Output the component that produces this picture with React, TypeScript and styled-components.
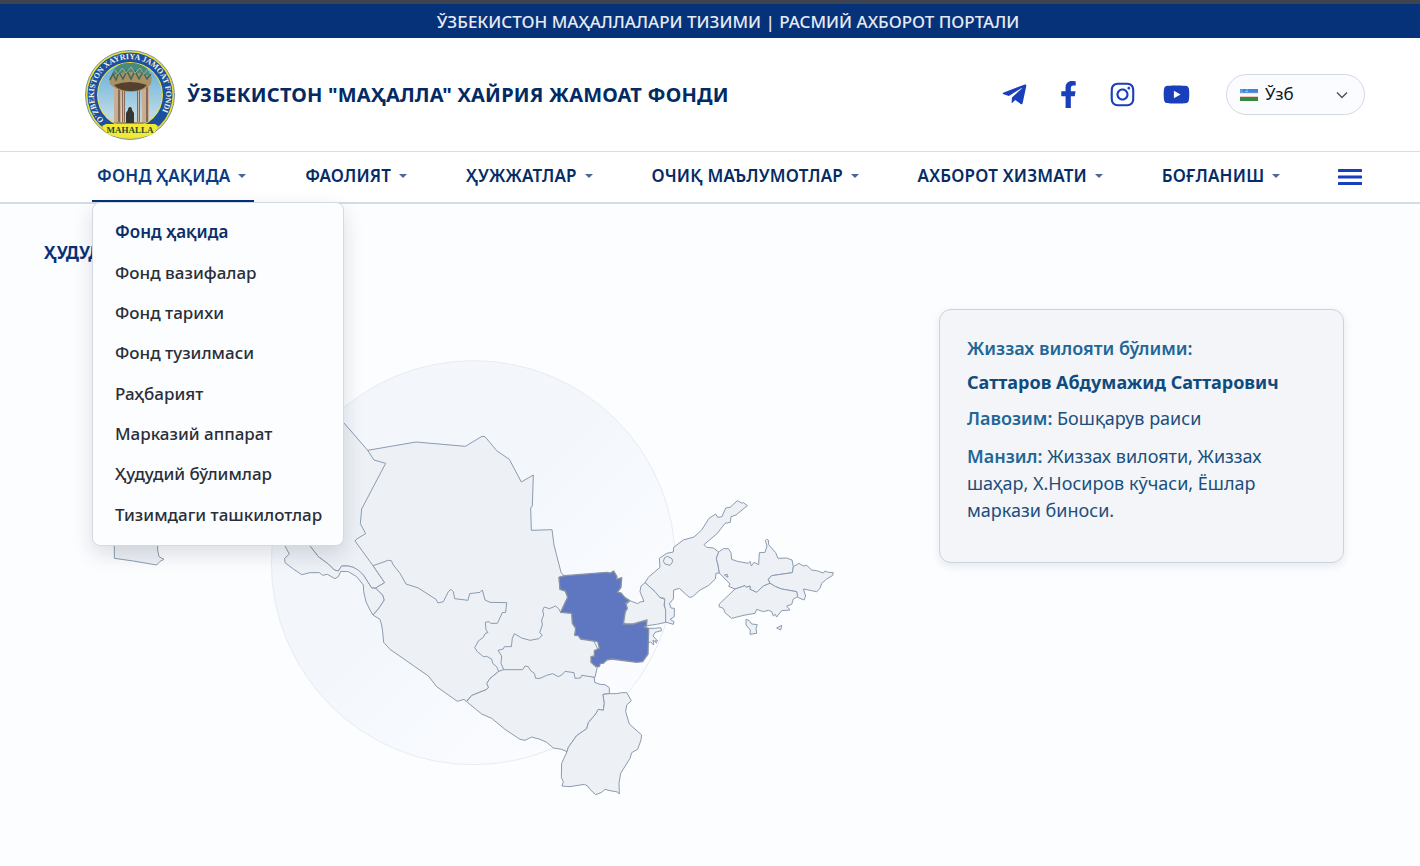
import React from "react";
import styled, { createGlobalStyle } from "styled-components";
import { FaTelegramPlane, FaFacebookF, FaInstagram, FaYoutube } from "react-icons/fa";

const GlobalStyle = createGlobalStyle`
  * { box-sizing: border-box; }
  body {
    margin: 0;
    background: #fcfdff;
    font-family: "Noto Sans", "Open Sans", sans-serif;
    color: #052c65;
  }
`;

const TopBar = styled.div`
  height: 38px;
  padding-left: 36px;
  border-top: 4px solid #3e4350;
  background: #06327a;
  color: #e6ebf3;
  font-size: 17px;
  font-weight: 500;
  line-height: 36px;
  text-align: center;
`;

const Header = styled.header`
  display: flex;
  align-items: center;
  justify-content: space-between;
  height: 114px;
  padding: 0 55px 0 85px;
  background: #fff;
  border-bottom: 1px solid #d9dde5;
`;

const Brand = styled.a`
  display: flex;
  align-items: center;
  gap: 12px;
  color: #032a63;
  text-decoration: none;
`;

const BrandName = styled.span`
  font-size: 20px;
  font-weight: 700;
  letter-spacing: 0.2px;
  line-height: 28px;
`;

const HeaderTools = styled.div`
  display: flex;
  align-items: center;
  gap: 36px;
`;

const SocialList = styled.div`
  display: flex;
  gap: 27px;
`;

const SocialLink = styled.a`
  display: flex;
  color: #1a3fbb;
`;

const LanguageBox = styled.label`
  display: flex;
  align-items: center;
  position: relative;
  width: 139px;
  height: 41px;
  border: 1px solid #d3d9e2;
  border-radius: 21px;
  background: #fbfcff;
`;

const Flag = styled.svg`
  position: absolute;
  left: 13px;
  pointer-events: none;
`;

const Chevron = styled.svg`
  position: absolute;
  right: 16px;
  pointer-events: none;
`;

const LanguageSelect = styled.select`
  appearance: none;
  width: 100%;
  height: 100%;
  padding: 0 36px 2px 38px;
  border: 0;
  border-radius: 21px;
  background: transparent;
  color: #10151d;
  font: 400 17px "Noto Sans", sans-serif;
`;

const Nav = styled.nav`
  display: flex;
  justify-content: space-between;
  height: 52px;
  padding: 0 58px 0 92px;
  background: #fff;
  border-bottom: 2px solid #d6dce6;
`;

const NavItem = styled.div`
  position: relative;
  display: flex;
`;

const NavButton = styled.button<{ $active?: boolean }>`
  display: flex;
  align-items: center;
  gap: 8px;
  padding: 0 8px 0 5px;
  border: 0;
  border-bottom: 2px solid ${(p) => (p.$active ? "#06327a" : "transparent")};
  background: none;
  color: ${(p) => (p.$active ? "#0b3a82" : "#052c65")};
  font: 600 17px/24px "Noto Sans", sans-serif;
  letter-spacing: 0.2px;
  white-space: nowrap;
`;

const Caret = styled.span`
  border: 4px solid transparent;
  border-top-color: #4a6796;
  border-bottom: 0;
`;

const Burger = styled.button`
  display: flex;
  align-items: center;
  padding: 0;
  margin-left: 4px;
  border: 0;
  background: none;
`;

const Dropdown = styled.div`
  position: absolute;
  z-index: 2;
  top: 50px;
  left: 0;
  display: grid;
  grid-auto-rows: 1fr;
  width: 252px;
  min-height: 344px;
  padding: 9px 0 10px;
  border: 1px solid #d3d9e2;
  border-radius: 8px;
  background: #fcfdff;
  box-shadow: 0 8px 20px rgba(20, 30, 50, 0.14);
`;

const DropdownLink = styled.a<{ $current?: boolean }>`
  display: flex;
  align-items: center;
  padding: 0 22px;
  color: ${(p) => (p.$current ? "#0a2f6b" : "#2a2e38")};
  font-size: 17px;
  font-weight: ${(p) => (p.$current ? 600 : 500)};
  line-height: 24px;
  text-decoration: none;
  white-space: nowrap;
`;

const Main = styled.main`
  padding: 36px 76px 56px 44px;
`;

const SectionTitle = styled.h2`
  margin: 0;
  color: #06327a;
  font-size: 17px;
  font-weight: 700;
  line-height: 26px;
`;

const Regions = styled.section`
  display: grid;
  grid-template-columns: minmax(0, 1fr) 405px;
  gap: 40px;
  align-items: start;
  padding-top: 43px;
`;

const MapDrawing = styled.svg`
  display: block;
  width: 100%;
  height: auto;
  margin-top: 41px;
`;

const Card = styled.article`
  min-height: 254px;
  padding: 25px 27px;
  border: 1px solid #c9d4e0;
  border-radius: 12px;
  background: #f4f5f9;
  box-shadow: 0 3px 8px rgba(30, 50, 80, 0.1);
  color: #1b4f7c;
  font-size: 18px;
  line-height: 27px;
`;

const CardTitle = styled.h3`
  margin: 0 0 7px;
  color: #1f6796;
  font-size: 18px;
  font-weight: 600;
  line-height: 27px;
`;

const PersonName = styled.p`
  margin: 0 0 9px;
  color: #0f4c7d;
  font-weight: 700;
`;

const Detail = styled.p`
  margin: 0 0 11px;
`;

const Term = styled.strong`
  color: #1f6796;
  font-weight: 600;
`;

const menuSections = ["ФАОЛИЯТ", "ҲУЖЖАТЛАР", "ОЧИҚ МАЪЛУМОТЛАР", "АХБОРОТ ХИЗМАТИ", "БОҒЛАНИШ"];

const fundPages = [
  "Фонд ҳақида",
  "Фонд вазифалар",
  "Фонд тарихи",
  "Фонд тузилмаси",
  "Раҳбарият",
  "Марказий аппарат",
  "Ҳудудий бўлимлар",
  "Тизимдаги ташкилотлар",
];

// Neighbouring regions overlap slightly; later ones define the shared border.
const regionShapes = [
  // Karakalpakstan
  "1103,1351 1032,1269 900,1130 600,1130 343,1300 343,1675 400,1683 470,1695 480,1684 492,1678 477,1670 473,1650 473,1600 930,1600 930,1638 955,1670 985,1692 1003,1710 1015,1713 1025,1698 1045,1698 1060,1702 1090,1725 1115,1764 1127,1764 1154,1748 1119,1697 1200,1600 1200,1400",
  // Khorezm
  "855,1600 855,1638 868,1662 854,1675 855,1688 880,1707 905,1724 930,1718 958,1718 968,1726 982,1723 1005,1736 1015,1730 1022,1714 1045,1715 1070,1730 1090,1755 1091,1775 1098,1805 1110,1830 1119,1845 1135,1827 1153,1800 1148,1785 1128,1765 1115,1764 1090,1725 1075,1710 1060,1702 1045,1698 1025,1698 1015,1713 1003,1710 985,1692 955,1670 930,1638 930,1600",
  // Kashkadarya
  "1496,2014 1520,1990 1700,1990 1783,2033 1784,2047 1800,2053 1815,2054 1828,2063 1828,2081 1809,2083 1813,2110 1810,2131 1795,2128 1787,2142 1765,2168 1760,2186 1730,2207 1705,2242 1701,2255 1685,2248 1660,2244 1640,2227 1620,2218 1595,2211 1575,2221 1560,2218 1515,2188 1475,2155 1445,2142 1400,2105 1415,2086 1460,2068 1465,2062 1460,2050 1470,2035",
  // Bukhara
  "1119,1845 1140,1858 1145,1875 1148,1895 1151,1927 1170,1948 1285,2028 1310,2060 1372,2104 1392,2098 1399,2104 1415,2086 1460,2068 1465,2062 1460,2050 1470,2035 1496,2014 1500,1990 1480,1951 1500,1900 1560,1800 1540,1750 1190,1650 1119,1697 1154,1748 1127,1764 1148,1785 1153,1800 1135,1827",
  // Samarkand
  "1511,2009 1568,2009 1575,1998 1585,2000 1592,2012 1603,2020 1607,2035 1620,2035 1640,2026 1658,2021 1675,2030 1685,2025 1695,2014 1722,2018 1725,2035 1742,2034 1745,2026 1785,2032 1792,2000 1800,1960 1760,1880 1720,1810 1650,1790 1600,1800 1530,1880 1480,1951 1500,1990",
  // Navoi
  "1103,1351 1248,1326 1396,1339 1446,1309 1455,1310 1490,1352 1528,1378 1564,1446 1600,1425 1597,1518 1592,1524 1594,1591 1656,1589 1662,1635 1683,1717 1692,1727 1677,1732 1680,1768 1696,1773 1703,1792 1682,1837 1675,1825 1667,1818 1648,1826 1633,1821 1628,1830 1631,1845 1625,1860 1627,1875 1619,1898 1627,1905 1617,1916 1590,1921 1565,1914 1543,1901 1537,1915 1534,1940 1513,1940 1510,1947 1494,1951 1505,1968 1503,1990 1511,2009 1496,2014 1490,2000 1478,1990 1475,1977 1460,1969 1450,1970 1432,1955 1424,1943 1435,1923 1450,1912 1455,1901 1464,1897 1458,1890 1456,1867 1467,1865 1472,1870 1492,1870 1507,1838 1517,1837 1520,1808 1470,1807 1455,1800 1447,1770 1440,1777 1409,1781 1404,1801 1364,1796 1360,1775 1353,1768 1345,1775 1330,1805 1314,1809 1308,1798 1255,1764 1218,1752 1200,1720 1180,1695 1174,1682 1165,1681 1119,1697 1065,1623 1070,1617 1097,1601 1081,1571 1085,1527 1157,1390 1122,1380",
  // Surkhandarya
  "1828,2081 1850,2081 1865,2078 1880,2078 1894,2102 1880,2115 1877,2135 1888,2172 1925,2205 1923,2220 1913,2248 1895,2258 1890,2275 1862,2320 1857,2350 1858,2382 1853,2376 1830,2372 1815,2368 1805,2377 1787,2384 1770,2368 1763,2358 1753,2353 1710,2360 1686,2358 1690,2345 1684,2333 1685,2290 1701,2255 1705,2242 1730,2207 1760,2186 1765,2168 1787,2142 1795,2128 1810,2131 1813,2110 1809,2083",
  // Tashkent
  "1935,1748 1945,1732 1980,1702 1978,1675 2000,1660 2020,1656 2021,1642 2050,1620 2082,1611 2105,1590 2127,1555 2147,1542 2153,1552 2166,1550 2177,1524 2190,1522 2212,1502 2225,1509 2230,1508 2242,1517 2208,1545 2193,1550 2191,1567 2175,1570 2152,1600 2112,1634 2120,1642 2140,1644 2156,1656 2149,1675 2154,1695 2158,1719 2148,1720 2146,1737 2125,1757 2100,1770 2078,1790 2068,1792 2038,1765 2021,1770 2020,1797 2008,1810 2013,1824 2023,1825 2023,1850 2010,1858 2022,1865 2020,1873 1996,1866 1994,1820 1993,1795 1978,1792 1960,1770",
  // Sirdarya
  "1889,1802 1913,1811 1920,1806 1932,1804 1920,1775 1923,1758 1935,1748 1965,1775 1980,1793 1995,1798 1992,1815 1997,1830 1997,1867 1970,1873 1941,1877 1900,1890 1850,1850",
  // Namangan
  "2156,1656 2170,1646 2185,1646 2193,1658 2195,1678 2212,1684 2245,1690 2250,1684 2254,1698 2262,1687 2276,1694 2278,1658 2295,1657 2301,1638 2296,1622 2300,1618 2305,1620 2306,1634 2327,1658 2334,1675 2360,1674 2376,1680 2380,1700 2377,1718 2315,1727 2305,1738 2310,1750 2290,1758 2270,1777 2250,1768 2250,1758 2239,1762 2235,1757 2205,1767 2186,1759 2190,1752 2158,1719 2154,1695 2149,1675",
  // Andijan
  "2377,1718 2380,1700 2397,1690 2410,1698 2420,1696 2435,1710 2450,1712 2470,1719 2475,1713 2485,1717 2500,1718 2498,1726 2480,1737 2465,1750 2460,1765 2450,1775 2435,1772 2410,1767 2417,1788 2412,1800 2393,1792 2390,1775 2345,1767 2327,1760 2310,1750 2305,1738 2315,1727",
  // Fergana
  "2205,1767 2158,1812 2157,1820 2170,1825 2175,1838 2195,1855 2235,1845 2265,1840 2270,1828 2290,1835 2305,1831 2315,1835 2320,1848 2326,1843 2330,1851 2345,1832 2370,1830 2360,1818 2375,1813 2380,1797 2393,1790 2390,1775 2345,1767 2327,1760 2310,1750 2290,1758 2270,1777 2250,1768 2250,1758 2239,1762 2235,1757",
  // Small exclaves
  "1994,1673 2002,1669 2016,1676 2018,1685 2010,1696 1995,1692 1990,1684",
  "1941,1885 1963,1885 1982,1883 1985,1892 1965,1897 1959,1908 1973,1923 1966,1922 1970,1929 1959,1920 1961,1935 1951,1925 1944,1932",
  "2238,1858 2248,1862 2255,1872 2272,1874 2268,1885 2270,1900 2250,1903 2251,1890 2238,1875",
  "2330,1884 2345,1876 2342,1890",
  "2173,1725 2182,1723 2184,1732",
];

const selectedRegion =
  "1677,1732 1695,1727 1820,1717 1831,1719 1841,1713 1851,1730 1850,1738 1865,1733 1863,1762 1852,1777 1863,1779 1875,1793 1889,1802 1877,1810 1882,1825 1876,1835 1870,1872 1900,1872 1941,1860 1939,1878 1932,1880 1946,1886 1944,1962 1928,1985 1910,1987 1835,1977 1820,1980 1810,1990 1801,1990 1798,2000 1788,2000 1773,1987 1773,1970 1783,1968 1783,1952 1798,1945 1793,1925 1742,1917 1735,1907 1724,1906 1727,1885 1717,1870 1715,1840 1682,1837 1703,1792 1696,1773 1680,1768";

function Emblem() {
  return (
    <svg width="90" height="90" viewBox="0 0 90 90" role="img" aria-label="Mahalla">
      <defs>
        <linearGradient id="sky" x1="0" y1="0" x2="0" y2="1">
          <stop offset="0" stopColor="#4ba0d4" />
          <stop offset="0.7" stopColor="#b8d8e6" />
          <stop offset="1" stopColor="#e6dcae" />
        </linearGradient>
        <clipPath id="disc">
          <circle cx="45" cy="45" r="32" />
        </clipPath>
        <path id="ring" d="M19 70 A36 36 0 1 1 71 70" />
      </defs>
      <circle cx="45" cy="45" r="44.500" fill="#e6dc3b" stroke="#7d94a0" strokeWidth="1" />
      <circle cx="45" cy="45" r="42.500" fill="#1c4f9d" />
      <circle cx="45" cy="45" r="33" fill="#eee443" />
      <g clipPath="url(#disc)">
        <rect width="90" height="90" fill="url(#sky)" />
        <path d="M26 72h40v12H26z" fill="#a0936a" />
        <path d="M29 34h7v38h-7zM57 34h7v38h-7z" fill="#c9ad90" />
        <path d="M33 35h2v37h-2zM61 35h2v37h-2zM37 38h3v34h-3zM52 38h3v34h-3z" fill="#846a57" />
        <path d="M38 38h1v34h-1zM53 38h1v34h-1z" fill="#cdb59b" />
        <path d="M34 16Q35 11 46 11Q56 11 57 16z" fill="#38877d" />
        <path d="M28 22Q31 13 46 13Q60 13 64 22L66 29H25z" fill="#4b8a7b" />
        <path d="M24 27Q45 17 67 27L66 34Q60 41 46 42Q31 41 25 34z" fill="#a99163" />
        <path d="M29 35Q45 29 62 35Q57 41 46 41Q34 41 29 35z" fill="#54402e" />
        <path d="M25 30l3-6 3 6 3-8 4 7 4-8 4 8 4-8 4 8 4-7 4 7 4-5" fill="none" stroke="#41665a" strokeWidth="1.500" />
        <path d="M30 20l3 4 4-6 4 5 5-6 4 6 5-5 4 6 3-4" fill="none" stroke="#8fb59c" strokeWidth="1" />
        <path d="M43 60q0-3 2-3t2 3l2 3v10h-8V63z" fill="#353631" />
      </g>
      <path d="M21 74h49l3 2-4 8q-24 8-47 0l-5-8z" fill="#f2e936" />
      <text fill="#eef2ea" fontFamily="Liberation Serif, serif" fontSize="8" fontWeight="700">
        <textPath href="#ring">O'ZBEKISTON XAYRIYA JAMOAT FONDI</textPath>
      </text>
      <text x="45" y="83" textAnchor="middle" fill="#26472c" fontFamily="Liberation Serif, serif" fontSize="9" fontWeight="700">
        MAHALLA
      </text>
    </svg>
  );
}

function RegionMap() {
  return (
    <MapDrawing viewBox="132 1050 2565 1380" role="img" aria-label="Ўзбекистон харитаси">
      <defs>
        <linearGradient id="halo" x1="0" y1="0" x2="1" y2="1">
          <stop offset="0.45" stopColor="#f3f7fc" />
          <stop offset="0.85" stopColor="#fbfcff" />
        </linearGradient>
      </defs>
      <circle cx="1420" cy="1688" r="606" fill="url(#halo)" stroke="#e9ebf3" strokeWidth="3" />
      <g fill="#edf1f6" stroke="#8b9bb0" strokeWidth="3" strokeLinejoin="round">
        {regionShapes.map((points) => (
          <polygon key={points} points={points} />
        ))}
      </g>
      <polygon points={selectedRegion} fill="#5f76c1" stroke="#8794a4" strokeWidth="4" strokeLinejoin="round" />
    </MapDrawing>
  );
}

export default function App() {
  return (
    <>
      <GlobalStyle />
      <TopBar>ЎЗБЕКИСТОН МАҲАЛЛАЛАРИ ТИЗИМИ | РАСМИЙ АХБОРОТ ПОРТАЛИ</TopBar>
      <Header>
        <Brand href="#">
          <Emblem />
          <BrandName>ЎЗБЕКИСТОН "МАҲАЛЛА" ХАЙРИЯ ЖАМОАТ ФОНДИ</BrandName>
        </Brand>
        <HeaderTools>
          <SocialList>
            <SocialLink href="#" aria-label="Telegram"><FaTelegramPlane size={27} /></SocialLink>
            <SocialLink href="#" aria-label="Facebook"><FaFacebookF size={27} /></SocialLink>
            <SocialLink href="#" aria-label="Instagram"><FaInstagram size={27} /></SocialLink>
            <SocialLink href="#" aria-label="YouTube"><FaYoutube size={27} /></SocialLink>
          </SocialList>
          <LanguageBox>
            <Flag width="18" height="12" viewBox="0 0 18 12" aria-hidden="true">
              <path d="M0 0h18v4H0z" fill="#3485ee" />
              <path d="M0 4h18v4H0z" fill="#fafafa" />
              <path d="M0 4h18M0 7.500h18" stroke="#eda4a4" strokeWidth="0.600" />
              <path d="M0 8h18v4H0z" fill="#35883d" />
              <path d="M2.500 1a1.200 1.200 0 1 0 0 2M5 2.500h3M6 1h2" fill="none" stroke="#b9d8fb" strokeWidth="0.600" />
            </Flag>
            <LanguageSelect aria-label="Тил" defaultValue="uz">
              <option value="uz">Ўзб</option>
            </LanguageSelect>
            <Chevron width="12" height="8" viewBox="0 0 12 8" aria-hidden="true">
              <path d="M1 1.500l5 5 5-5" fill="none" stroke="#4b5563" strokeWidth="1.500" />
            </Chevron>
          </LanguageBox>
        </HeaderTools>
      </Header>
      <Nav>
        <NavItem>
          <NavButton $active aria-expanded="true">ФОНД ҲАҚИДА<Caret /></NavButton>
          <Dropdown>
            {fundPages.map((page, i) => (
              <DropdownLink key={page} href="#" $current={i === 0}>{page}</DropdownLink>
            ))}
          </Dropdown>
        </NavItem>
        {menuSections.map((name) => (
          <NavItem key={name}>
            <NavButton>{name}<Caret /></NavButton>
          </NavItem>
        ))}
        <Burger aria-label="Меню">
          <svg width="24" height="16" viewBox="0 0 24 16">
            <path d="M1 1.500h22M1 8h22M1 14.500h22" stroke="#1a3fbb" strokeWidth="3" strokeLinecap="round" />
          </svg>
        </Burger>
      </Nav>
      <Main>
        <SectionTitle>ҲУДУДИЙ БЎЛИМЛАР</SectionTitle>
        <Regions>
          <RegionMap />
          <Card>
            <CardTitle>Жиззах вилояти бўлими:</CardTitle>
            <PersonName>Саттаров Абдумажид Саттарович</PersonName>
            <Detail><Term>Лавозим:</Term> Бошқарув раиси</Detail>
            <Detail><Term>Манзил:</Term> Жиззах вилояти, Жиззах шаҳар, Х.Носиров кўчаси, Ёшлар маркази биноси.</Detail>
          </Card>
        </Regions>
      </Main>
    </>
  );
}
